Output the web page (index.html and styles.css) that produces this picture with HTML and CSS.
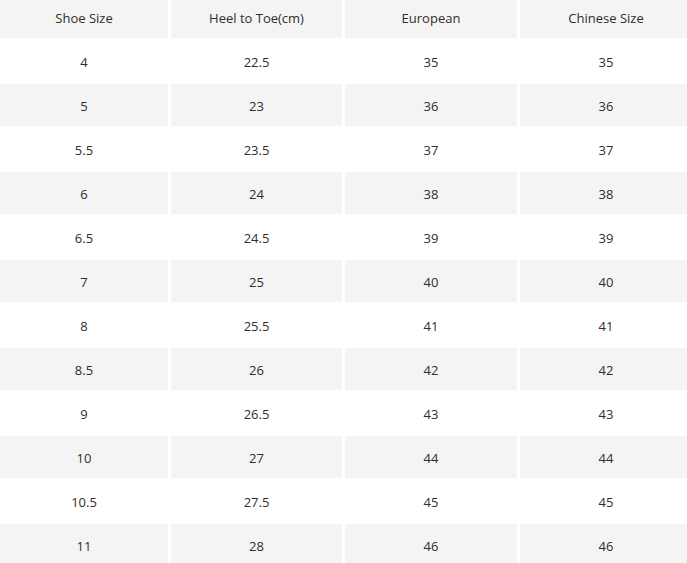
FILE: index.html
```html
<!DOCTYPE html>
<html>
<head>
<meta charset="utf-8">
<link rel="stylesheet" href="styles.css">
</head>
<body>
<div class="size-table">
  <div class="row head"><div class="cell">Shoe Size</div><div class="cell">Heel to Toe(cm)</div><div class="cell">European</div><div class="cell">Chinese Size</div></div>
  <div class="row"><div class="cell">4</div><div class="cell">22.5</div><div class="cell">35</div><div class="cell">35</div></div>
  <div class="row"><div class="cell">5</div><div class="cell">23</div><div class="cell">36</div><div class="cell">36</div></div>
  <div class="row"><div class="cell">5.5</div><div class="cell">23.5</div><div class="cell">37</div><div class="cell">37</div></div>
  <div class="row"><div class="cell">6</div><div class="cell">24</div><div class="cell">38</div><div class="cell">38</div></div>
  <div class="row"><div class="cell">6.5</div><div class="cell">24.5</div><div class="cell">39</div><div class="cell">39</div></div>
  <div class="row"><div class="cell">7</div><div class="cell">25</div><div class="cell">40</div><div class="cell">40</div></div>
  <div class="row"><div class="cell">8</div><div class="cell">25.5</div><div class="cell">41</div><div class="cell">41</div></div>
  <div class="row"><div class="cell">8.5</div><div class="cell">26</div><div class="cell">42</div><div class="cell">42</div></div>
  <div class="row"><div class="cell">9</div><div class="cell">26.5</div><div class="cell">43</div><div class="cell">43</div></div>
  <div class="row"><div class="cell">10</div><div class="cell">27</div><div class="cell">44</div><div class="cell">44</div></div>
  <div class="row"><div class="cell">10.5</div><div class="cell">27.5</div><div class="cell">45</div><div class="cell">45</div></div>
  <div class="row"><div class="cell">11</div><div class="cell">28</div><div class="cell">46</div><div class="cell">46</div></div>
</div>
</body>
</html>
```
FILE: styles.css
```css
html, body {
  margin: 0;
  padding: 0;
  background: #ffffff;
}
body {
  font-family: "Open Sans", "DejaVu Sans", sans-serif;
  font-size: 13px;
  color: #2e2e2e;
  overflow: hidden;
}
.size-table {
  display: flex;
  flex-direction: column;
  gap: 2px;
  width: 692px;
}
.row {
  display: grid;
  grid-template-columns: 168px 171px 172px 172px;
  column-gap: 3px;
  height: 42px;
}
.row.head {
  height: 38px;
}
.cell {
  display: flex;
  align-items: center;
  justify-content: center;
  padding-top: 2px;
}
.row.head .cell {
  padding-top: 0;
  padding-bottom: 2px;
}
.row:nth-child(odd) .cell {
  background: #f4f4f4;
}
```
